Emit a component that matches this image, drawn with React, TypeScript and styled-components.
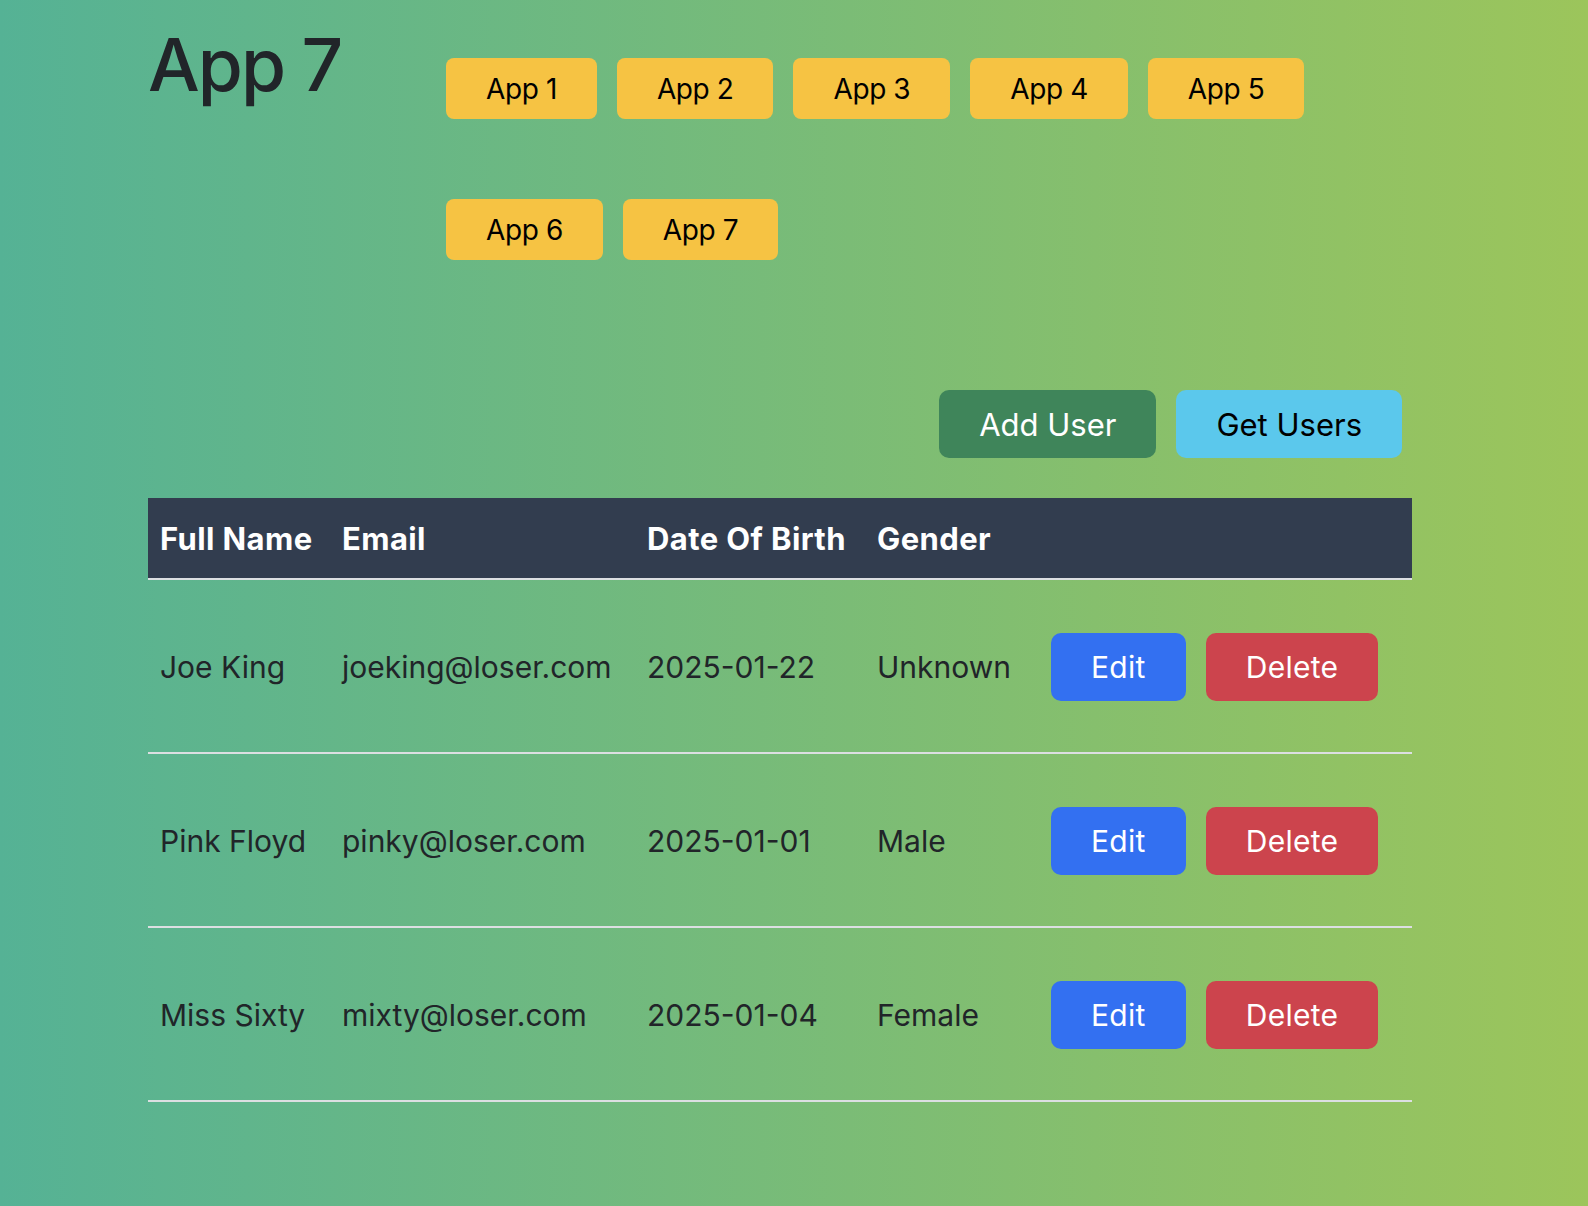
import React from "react";
import styled, { createGlobalStyle } from "styled-components";

const Global = createGlobalStyle`
  html, body { margin: 0; padding: 0; }
  body {
    min-height: 100vh;
    background: linear-gradient(90deg, #55b295 0%, #9cc55b 100%);
    font-family: Inter, "Noto Sans", sans-serif;
    color: #212529;
  }
`;

const Page = styled.div`
  box-sizing: border-box;
  width: 1264px;
  min-height: 1206px;
  margin-left: 148px;
  padding-top: 18px;
`;

const Header = styled.header`
  display: flex;
  align-items: flex-start;
`;

const Title = styled.h1`
  flex: 0 0 288px;
  margin: 10px 0 0;
  font-size: 73px;
  font-weight: 500;
  line-height: 1;
  letter-spacing: -2px;
  color: #212529;
`;

const Nav = styled.nav`
  flex: 1;
  display: flex;
  flex-wrap: wrap;
  align-items: flex-start;
`;

const NavButton = styled.button`
  height: 61px;
  margin: 40px 10px;
  padding: 0 40px;
  border: none;
  border-radius: 8px;
  background: #f6c343;
  color: #000;
  font-family: inherit;
  font-size: 28px;
  font-weight: 400;
  letter-spacing: -0.4px;
  cursor: pointer;
`;

const Toolbar = styled.div`
  display: flex;
  justify-content: flex-end;
  margin-top: 90px;
`;

type Variant = "success" | "info" | "primary" | "danger";

const colors: Record<Variant, { bg: string; fg: string }> = {
  success: { bg: "#3f855a", fg: "#ffffff" },
  info: { bg: "#5bc8ec", fg: "#000000" },
  primary: { bg: "#3370f1", fg: "#ffffff" },
  danger: { bg: "#cc444d", fg: "#ffffff" },
};

const ActionButton = styled.button<{ $variant: Variant; $size?: number; $track?: number }>`
  height: 68px;
  margin: 0 10px;
  padding: 0 40px;
  border: none;
  border-radius: 10px;
  background: ${(p) => colors[p.$variant].bg};
  color: ${(p) => colors[p.$variant].fg};
  font-family: inherit;
  font-size: ${(p) => p.$size ?? 30}px;
  letter-spacing: ${(p) => p.$track ?? 0.3}px;
  font-weight: 400;
  cursor: pointer;
  vertical-align: middle;
`;

const Table = styled.table`
  width: 100%;
  margin-top: 40px;
  border-collapse: collapse;
  table-layout: fixed;
`;

const Col = styled.col<{ $w: number }>`
  width: ${(p) => p.$w}px;
`;

const Th = styled.th`
  height: 80px;
  padding: 0 12px;
  background: #323d4f;
  color: #fff;
  font-size: 31px;
  font-weight: 700;
  letter-spacing: 0.4px;
  text-align: left;
  white-space: nowrap;
  border-bottom: 2px solid #dcdfe2;
`;

const Tr = styled.tr`
  border-bottom: 2px solid #dcdfe2;
`;

const Td = styled.td`
  box-sizing: border-box;
  height: 174px;
  padding: 2px 12px 0;
  font-size: 30px;
  color: #212529;
  white-space: nowrap;
  vertical-align: middle;
`;

const users = [
  { name: "Joe King", email: "joeking@loser.com", dob: "2025-01-22", gender: "Unknown" },
  { name: "Pink Floyd", email: "pinky@loser.com", dob: "2025-01-01", gender: "Male" },
  { name: "Miss Sixty", email: "mixty@loser.com", dob: "2025-01-04", gender: "Female" },
];

export default function App() {
  return (
    <>
      <Global />
      <Page>
        <Header>
          <Title>App 7</Title>
          <Nav>
            {[1, 2, 3, 4, 5, 6, 7].map((n) => (
              <NavButton key={n}>App {n}</NavButton>
            ))}
          </Nav>
        </Header>
        <Toolbar>
          <ActionButton $variant="success" $size={31} $track={0}>Add User</ActionButton>
          <ActionButton $variant="info" $size={31} $track={0}>Get Users</ActionButton>
        </Toolbar>
        <Table>
          <colgroup>
            <Col $w={182} />
            <Col $w={305} />
            <Col $w={230} />
            <Col $w={164} />
            <Col $w={383} />
          </colgroup>
          <thead>
            <tr>
              <Th>Full Name</Th>
              <Th>Email</Th>
              <Th>Date Of Birth</Th>
              <Th>Gender</Th>
              <Th></Th>
            </tr>
          </thead>
          <tbody>
            {users.map((u) => (
              <Tr key={u.email}>
                <Td>{u.name}</Td>
                <Td>{u.email}</Td>
                <Td>{u.dob}</Td>
                <Td>{u.gender}</Td>
                <Td>
                  <ActionButton $variant="primary">Edit</ActionButton>
                  <ActionButton $variant="danger">Delete</ActionButton>
                </Td>
              </Tr>
            ))}
          </tbody>
        </Table>
      </Page>
    </>
  );
}
